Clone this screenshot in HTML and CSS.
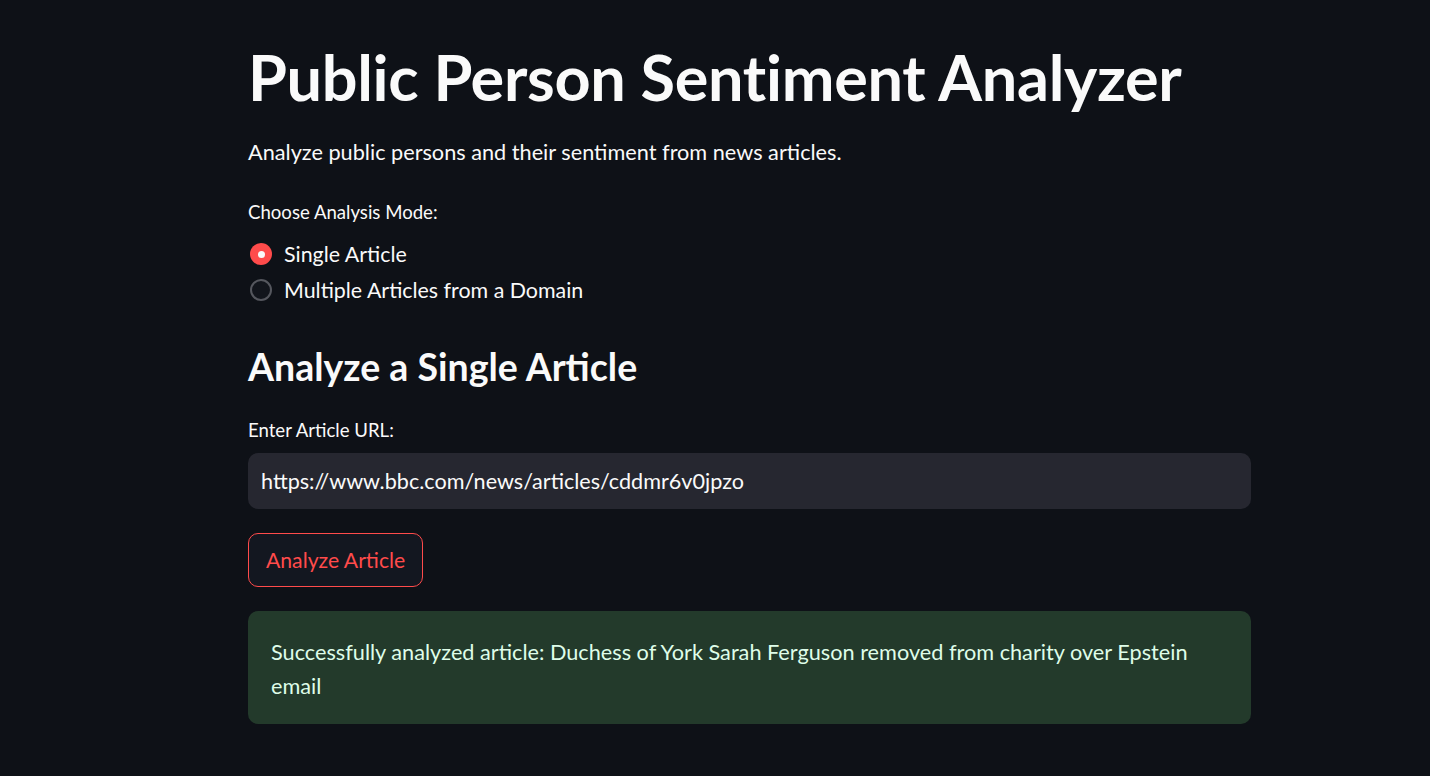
FILE: index.html
```html
<!DOCTYPE html>
<html lang="en">
<head>
<meta charset="utf-8">
<title>Public Person Sentiment Analyzer</title>
<link rel="stylesheet" href="styles.css">
</head>
<body>
<main class="page">
  <h1 class="title">Public Person Sentiment Analyzer</h1>
  <p class="subtitle">Analyze public persons and their sentiment from news articles.</p>

  <div class="field">
    <div class="label">Choose Analysis Mode:</div>
    <div class="radio-group">
      <label class="radio checked"><span class="dot"></span><span class="radio-text">Single Article</span></label>
      <label class="radio"><span class="dot"></span><span class="radio-text">Multiple Articles from a Domain</span></label>
    </div>
  </div>

  <h2 class="section">Analyze a Single Article</h2>

  <div class="field">
    <div class="label">Enter Article URL:</div>
    <div class="input">https://www.bbc.com/news/articles/cddmr6v0jpzo</div>
  </div>

  <button class="btn">Analyze Article</button>

  <div class="alert">Successfully analyzed article: Duchess of York Sarah Ferguson removed from charity over Epstein email</div>
</main>
</body>
</html>
```

FILE: styles.css
```css
html, body {
  margin: 0;
  padding: 0;
  background: #0e1117;
}
body {
  font-family: Lato, "Noto Sans", sans-serif;
  color: #fafafa;
  height: 776px;
  overflow: hidden;
}
.page {
  width: 1003px;
  margin-left: 248px;
  padding-top: 37px;
  display: flex;
  flex-direction: column;
  align-items: flex-start;
}
.title {
  margin: 0;
  font-size: 63px;
  font-weight: 700;
  line-height: 80px;
  letter-spacing: -0.3px;
}
.subtitle {
  margin: 18px 0 0;
  font-size: 21.7px;
  line-height: 34px;
}
.field {
  display: flex;
  flex-direction: column;
  width: 100%;
}
.label {
  font-size: 18.6px;
  line-height: 26px;
}
.page > .field:first-of-type {
  margin-top: 30px;
}
.radio-group {
  display: flex;
  flex-direction: column;
  gap: 4px;
  margin-top: 13px;
}
.radio {
  display: flex;
  align-items: center;
  gap: 12px;
  font-size: 21.4px;
  line-height: 32px;
}
.dot {
  width: 22px;
  height: 22px;
  border-radius: 50%;
  border: 2px solid #55575e;
  background: #12151c;
  box-sizing: border-box;
  margin-left: 2px;
  position: relative;
}
.radio.checked .dot {
  border: none;
  background: #ff4b4b;
}
.radio.checked .dot::after {
  content: "";
  position: absolute;
  left: 7.5px;
  top: 7.5px;
  width: 7px;
  height: 7px;
  border-radius: 50%;
  background: #fafafa;
}
.section {
  margin: 36px 0 0;
  font-size: 37.5px;
  font-weight: 700;
  line-height: 50px;
}
.section + .field {
  margin-top: 25px;
}
.input {
  margin-top: 10px;
  box-sizing: border-box;
  width: 100%;
  height: 56px;
  background: #262730;
  border-radius: 10px;
  padding: 0 13px;
  display: flex;
  align-items: center;
  font-size: 21.6px;
}
.btn {
  margin-top: 24px;
  height: 54px;
  padding: 0 17px;
  border: 1px solid #ff4b4b;
  border-radius: 10px;
  background: #131720;
  color: #ff4b4b;
  font-family: inherit;
  font-size: 21.2px;
}
.alert {
  margin-top: 24px;
  box-sizing: border-box;
  width: 100%;
  background: #233a2b;
  color: #dffde9;
  border-radius: 10px;
  padding: 24px 26px 21px 23px;
  font-size: 21.7px;
  line-height: 34px;
}
```
